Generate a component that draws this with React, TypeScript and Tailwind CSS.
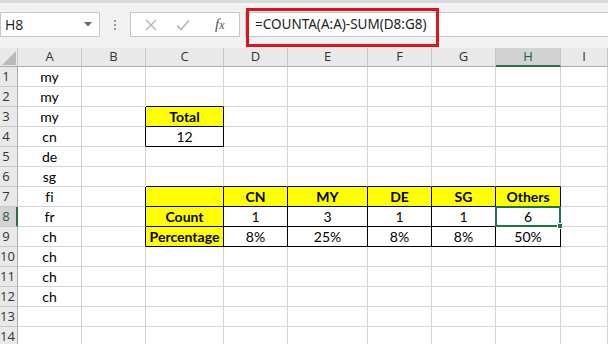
import React from "react";

const COLS = ["A", "B", "C", "D", "E", "F", "G", "H", "I"];
const COL_A = ["my", "my", "my", "cn", "de", "sg", "fi", "fr", "ch", "ch", "ch", "ch", "", ""];

type Cell = { v: string; bold?: boolean; fill?: boolean };

const cells: Record<string, Cell> = {
  "3-3": { v: "Total", bold: true, fill: true },
  "4-3": { v: "12" },
  "7-3": { v: "", bold: true, fill: true },
  "7-4": { v: "CN", bold: true, fill: true },
  "7-5": { v: "MY", bold: true, fill: true },
  "7-6": { v: "DE", bold: true, fill: true },
  "7-7": { v: "SG", bold: true, fill: true },
  "7-8": { v: "Others", bold: true, fill: true },
  "8-3": { v: "Count", bold: true, fill: true },
  "8-4": { v: "1" },
  "8-5": { v: "3" },
  "8-6": { v: "1" },
  "8-7": { v: "1" },
  "8-8": { v: "6" },
  "9-3": { v: "Percentage", bold: true, fill: true },
  "9-4": { v: "8%" },
  "9-5": { v: "25%" },
  "9-6": { v: "8%" },
  "9-7": { v: "8%" },
  "9-8": { v: "50%" },
};

// cells that have a thin black outline
function boxed(r: number, c: number) {
  if (c === 3 && (r === 3 || r === 4)) return true;
  return r >= 7 && r <= 9 && c >= 3 && c <= 8;
}

function edgeClass(r: number, c: number) {
  const right = boxed(r, c) || boxed(r, c + 1);
  const bottom = boxed(r, c) || boxed(r + 1, c);
  if (right && bottom) return "border-r border-b border-black";
  if (right) return "border-r border-b border-[#d4d4d4] border-r-black";
  if (bottom) return "border-r border-b border-[#d4d4d4] border-b-black";
  return "border-r border-b border-[#d4d4d4]";
}

function FormulaBar() {
  return (
    <div className="relative h-[48px] bg-[#f1f1f1]">
      <div className="h-[3px] bg-[#d9d9d9]" />
      <div className="flex items-center pt-[9px] h-[34px]">
        {/* name box */}
        <div className="w-[100px] h-[25px] bg-white border border-[#c6c6c6] flex items-center justify-between pl-[4px] pr-[7px]">
          <span className="text-[14px] text-[#222] font-['Open_Sans',sans-serif]">H8</span>
          <svg width="8" height="5" viewBox="0 0 8 5">
            <polygon points="0,0 8,0 4,4.5" fill="#6b6b6b" />
          </svg>
        </div>
        <div className="w-[30px] flex flex-col items-center gap-[2px]">
          <span className="w-[2px] h-[2px] bg-[#9a9a9a]" />
          <span className="w-[2px] h-[2px] bg-[#9a9a9a]" />
          <span className="w-[2px] h-[2px] bg-[#9a9a9a]" />
        </div>
        {/* cancel / enter / fx */}
        <div className="w-[110px] h-[25px] bg-white border border-[#c6c6c6] flex items-center">
          <svg className="ml-[14px]" width="12" height="12" viewBox="0 0 12 12">
            <path d="M1 1L11 11M11 1L1 11" stroke="#b4b4b4" strokeWidth="1.4" />
          </svg>
          <svg className="ml-[19px]" width="14" height="12" viewBox="0 0 14 12">
            <path d="M1 6.5L5 10.5L13 1.5" stroke="#b4b4b4" strokeWidth="1.6" fill="none" />
          </svg>
          <span className="ml-[25px] text-[15px] italic text-[#555] font-['Liberation_Serif',serif] leading-none">
            f<span className="text-[12px]">x</span>
          </span>
        </div>
        {/* formula input */}
        <div className="ml-[5px] flex-1 h-[25px] bg-white border-y border-l border-[#c6c6c6] flex items-center pl-[9px]">
          <span className="text-[13.5px] text-[#222] font-['Noto_Sans',sans-serif]">=COUNTA(A:A)-SUM(D8:G8)</span>
        </div>
      </div>
      {/* red annotation box */}
      <div className="absolute left-[246px] top-[8px] w-[193px] h-[39px] border-[3px] border-[#e0141b]" />
    </div>
  );
}

export default function App() {
  const rows = COL_A.map((_, i) => i + 1);
  return (
    <div className="w-[608px] h-[344px] overflow-hidden bg-white">
      <FormulaBar />
      <div className="grid grid-cols-[18px_64px_64px_78px_64px_80px_64px_64px_65px_1fr] grid-rows-[19px_repeat(14,20px)]">
        {/* header row */}
        <div className="relative bg-[#e9e9e9] border-r border-b border-[#c8c8c8] border-b-[#ababab]">
          <svg className="absolute right-[1px] bottom-[1px]" width="14" height="14" viewBox="0 0 14 14">
            <polygon points="14,0 14,14 0,14" fill="#b9b9b9" />
          </svg>
        </div>
        {COLS.map((c) =>
          c === "H" ? (
            <div key={c} className="flex items-center justify-center bg-[#d3d3d3] border-r border-b-2 border-[#c8c8c8] border-b-[#217346] text-[#1e5b3a] font-['Open_Sans',sans-serif] text-[13px]">
              {c}
            </div>
          ) : (
            <div key={c} className="flex items-center justify-center bg-[#e9e9e9] border-r border-b border-[#c8c8c8] border-b-[#ababab] text-[#333] font-['Open_Sans',sans-serif] text-[13px]">
              {c}
            </div>
          )
        )}
        {rows.map((r) => (
          <React.Fragment key={r}>
            <div
              className={
                r === 8
                  ? "flex items-center bg-[#d3d3d3] border-b border-r-2 border-[#c8c8c8] border-r-[#217346] text-[#1e5b3a] font-['Open_Sans',sans-serif] text-[13px]"
                  : "flex items-center bg-[#e9e9e9] border-b border-r border-[#c8c8c8] border-r-[#ababab] text-[#333] font-['Open_Sans',sans-serif] text-[13px]"
              }
            >
              <span className="w-[12px] text-center whitespace-nowrap">{r}</span>
            </div>
            {COLS.map((_, i) => {
              const c = i + 1;
              const cell: Cell | undefined = c === 1 ? { v: COL_A[r - 1] } : cells[`${r}-${c}`];
              const fill = cell?.fill ? "bg-[#ffff00]" : "bg-white";
              const weight = cell?.bold ? "font-bold" : "font-normal";
              const sel = r === 8 && c === 8;
              return (
                <div
                  key={c}
                  className={`${sel ? "relative " : ""}flex items-end justify-center pb-[1px] ${edgeClass(r, c)} ${fill} ${weight} text-[14px] leading-[17px] text-black font-['Lato',sans-serif] [font-variant-ligatures:none]`}
                >
                  {cell?.v}
                  {sel && (
                    <div className="absolute -left-[1px] -top-[1px] -right-[1px] -bottom-[1px] border-2 border-[#217346]">
                      <div className="absolute -right-[4px] -bottom-[4px] w-[6px] h-[6px] bg-[#217346] border border-white" />
                    </div>
                  )}
                </div>
              );
            })}
          </React.Fragment>
        ))}
      </div>
    </div>
  );
}
